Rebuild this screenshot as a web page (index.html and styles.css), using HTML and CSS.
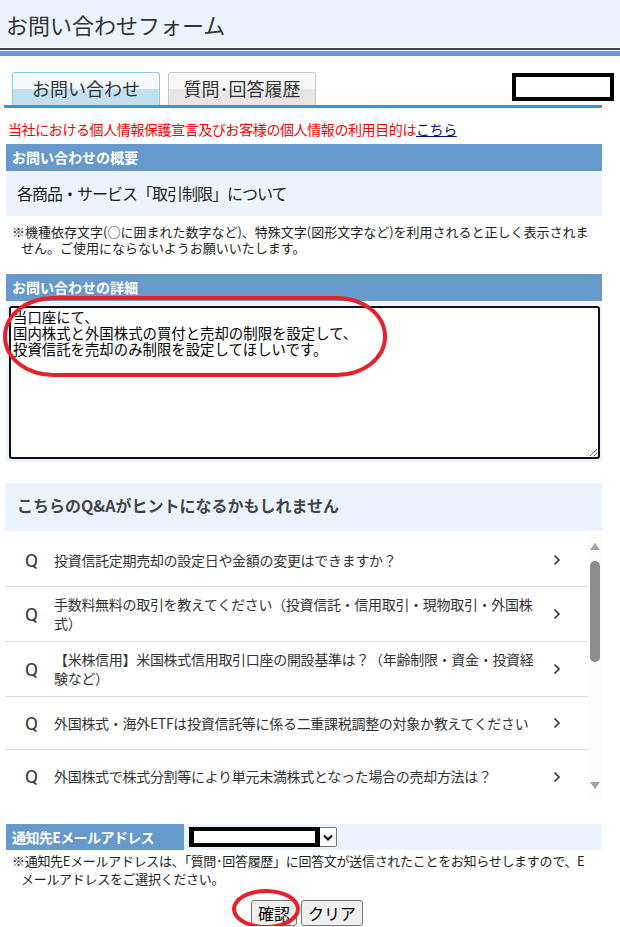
FILE: index.html
```html
<!DOCTYPE html>
<html lang="ja">
<head>
<meta charset="utf-8">
<title>お問い合わせフォーム</title>
<link rel="stylesheet" href="styles.css">
</head>
<body>
<header class="page-head">
  <h1>お問い合わせフォーム</h1>
</header>
<div class="head-rule"></div>

<main class="wrap">
  <nav class="tabs">
    <a class="tab tab-active">お問い合わせ</a>
    <a class="tab tab-plain">質問･回答履歴</a>
    <div class="redact-name"></div>
  </nav>

  <p class="privacy">当社における個人情報保護宣言及びお客様の個人情報の利用目的は<a href="#">こちら</a></p>

  <section class="block">
    <h2 class="sec-head">お問い合わせの概要</h2>
    <div class="summary">各商品・サービス「取引制限」について</div>
  </section>

  <p class="note">※機種依存文字(○に囲まれた数字など)、特殊文字(図形文字など)を利用されると正しく表示されません。ご使用にならないようお願いいたします。</p>

  <section class="block block-detail">
    <h2 class="sec-head">お問い合わせの詳細</h2>
    <div class="detail">
      <textarea class="detail-input">当口座にて、
国内株式と外国株式の買付と売却の制限を設定して、
投資信託を売却のみ制限を設定してほしいです。</textarea>
    </div>
  </section>

  <section class="qa">
    <h3 class="qa-head">こちらのQ&amp;Aがヒントになるかもしれません</h3>
    <div class="qa-body">
      <ul class="qa-list">
        <li class="qa-item"><span class="qa-q">Q</span><span class="qa-text">投資信託定期売却の設定日や金額の変更はできますか？</span><svg class="qa-arrow" width="8" height="12" viewBox="0 0 8 12"><path d="M1.5 1.5 L6 6 L1.5 10.5" fill="none" stroke="#333" stroke-width="1.6"/></svg></li>
        <li class="qa-item"><span class="qa-q">Q</span><span class="qa-text">手数料無料の取引を教えてください（投資信託・信用取引・現物取引・外国株式）</span><svg class="qa-arrow" width="8" height="12" viewBox="0 0 8 12"><path d="M1.5 1.5 L6 6 L1.5 10.5" fill="none" stroke="#333" stroke-width="1.6"/></svg></li>
        <li class="qa-item"><span class="qa-q">Q</span><span class="qa-text">【米株信用】米国株式信用取引口座の開設基準は？（年齢制限・資金・投資経験など）</span><svg class="qa-arrow" width="8" height="12" viewBox="0 0 8 12"><path d="M1.5 1.5 L6 6 L1.5 10.5" fill="none" stroke="#333" stroke-width="1.6"/></svg></li>
        <li class="qa-item"><span class="qa-q">Q</span><span class="qa-text">外国株式・海外ETFは投資信託等に係る二重課税調整の対象か教えてください</span><svg class="qa-arrow" width="8" height="12" viewBox="0 0 8 12"><path d="M1.5 1.5 L6 6 L1.5 10.5" fill="none" stroke="#333" stroke-width="1.6"/></svg></li>
        <li class="qa-item qa-last"><span class="qa-q">Q</span><span class="qa-text">外国株式で株式分割等により単元未満株式となった場合の売却方法は？</span><svg class="qa-arrow" width="8" height="12" viewBox="0 0 8 12"><path d="M1.5 1.5 L6 6 L1.5 10.5" fill="none" stroke="#333" stroke-width="1.6"/></svg></li>
      </ul>
      <div class="scrollbar">
        <svg class="sb-arrow" width="12" height="9" viewBox="0 0 12 9"><path d="M6 1 L11 8 L1 8 Z" fill="#a3a3a3"/></svg>
        <div class="sb-thumb"></div>
        <div class="sb-space"></div>
        <svg class="sb-arrow" width="12" height="9" viewBox="0 0 12 9"><path d="M1 1 L11 1 L6 8 Z" fill="#a3a3a3"/></svg>
      </div>
    </div>
  </section>

  <div class="mail-row">
    <div class="mail-label">通知先Eメールアドレス</div>
    <div class="mail-field">
      <div class="fake-select">
        <span class="redact-mail"></span>
        <span class="select-btn"><svg width="10" height="7" viewBox="0 0 10 7"><path d="M1 1.5 L5 5.5 L9 1.5" fill="none" stroke="#000" stroke-width="2"/></svg></span>
      </div>
    </div>
  </div>

  <p class="note note-mail">※通知先Eメールアドレスは、「質問･回答履歴」に回答文が送信されたことをお知らせしますので、Eメールアドレスをご選択ください。</p>

  <div class="buttons">
    <button class="btn" type="button">確認</button>
    <button class="btn" type="button">クリア</button>
  </div>
</main>

<div class="mark mark-detail"></div>
<div class="mark mark-confirm"></div>
</body>
</html>
```

FILE: styles.css
```css
* { box-sizing: border-box; }

body {
  margin: 0;
  font-family: "Noto Sans CJK JP", "Noto Sans", sans-serif;
  color: #222;
  background: #fff;
  position: relative;
}

.page-head {
  background: #ebf3fe;
  height: 47px;
  padding-left: 6px;
  display: flex;
  align-items: center;
}
.page-head h1 {
  margin: 0;
  font-size: 22px;
  font-weight: normal;
  color: #333;
  line-height: 1;
}
.head-rule {
  height: 9px;
  border-top: 1px solid #fff;
  background: linear-gradient(#444 0, #444 2px, #fff 2px, #fff 3px, #6699cc 3px, #6699cc 8px);
}

.wrap {
  width: 598px;
  margin-left: 4px;
}

/* tabs */
.tabs {
  display: flex;
  align-items: flex-end;
  gap: 8px;
  padding: 16px 0 0 8px;
  border-bottom: 3px solid #3399cc;
  height: 52px;
}
.tab {
  width: 148px;
  height: 33px;
  border: 1px solid #ccc;
  border-bottom: none;
  border-radius: 3px 3px 0 0;
  display: flex;
  align-items: center;
  justify-content: center;
  font-size: 18px;
  color: #333;
  padding-bottom: 2px;
}
.tab-active {
  border-color: #8fc6e8;
  background: linear-gradient(#f3f9fd 0, #f3f9fd 50%, #c2e0f0 50%, #c2e0f0 100%);
}
.tab-plain {
  border-color: #c8c8c8;
  background: linear-gradient(#f8f8f8 0, #f8f8f8 50%, #e6e6e6 50%, #e6e6e6 100%);
}
.redact-name {
  align-self: flex-start;
  margin: 1px -12px 0 auto;
  width: 102px;
  height: 28px;
  border: 4px solid #000;
  background: #fff;
}

.privacy {
  margin: 12px 0 6px 4px;
  font-size: 14px;
  line-height: 18px;
  letter-spacing: -0.4px;
  color: #f00;
}
.privacy a {
  color: #001a8c;
  text-decoration: underline;
}

.block { margin-left: 2px; }
.sec-head {
  margin: 0;
  height: 27px;
  line-height: 27px;
  background: #6699cc;
  color: #fff;
  font-size: 14px;
  font-weight: bold;
  padding-left: 6px;
}
.summary {
  height: 45px;
  line-height: 45px;
  background: #edf4fd;
  padding-left: 11px;
  font-size: 16px;
  letter-spacing: -1px;
  color: #222;
}

.note {
  margin: 8px 0 0 4px;
  padding: 0 8px 0 13px;
  text-indent: -9px;
  font-size: 13px;
  line-height: 16px;
  color: #222;
}

.block-detail { margin-top: 18px; }
.detail {
  background: #edf4fd;
  padding: 5px 2px 3px 3px;
  height: 161px;
}
.detail-input {
  display: block;
  width: 100%;
  height: 153px;
  border: 2px solid #111;
  border-radius: 3px;
  padding: 1px 2px;
  font-family: "Noto Sans CJK JP", sans-serif;
  font-size: 14.4px;
  line-height: 16px;
  color: #000;
  background: #fff;
  resize: vertical;
  outline: none;
}

/* Q&A */
.qa { margin: 21px 0 0 1px; }
.qa-head {
  margin: 0;
  height: 48px;
  background: #ebf3fe;
  display: flex;
  align-items: center;
  padding: 0 0 4px 12px;
  font-size: 16px;
  font-weight: bold;
  color: #444;
}
.qa-body {
  display: flex;
  height: 266px;
  margin-top: 3px;
}
.qa-list {
  flex: 1;
  margin: 0;
  padding: 0;
  list-style: none;
  overflow: hidden;
}
.qa-item {
  display: flex;
  align-items: center;
  min-height: 53px;
  padding: 8px 0;
  border-bottom: 1px solid #dcdcdc;
}
.qa-last { border-bottom: none; }
.qa-q {
  width: 49px;
  padding-left: 20px;
  font-family: "Roboto", "Noto Sans", sans-serif;
  font-size: 19px;
  color: #333;
}
.qa-text {
  width: 487px;
  font-size: 14px;
  line-height: 19px;
  letter-spacing: -0.3px;
  color: #333;
}
.qa-arrow {
  margin-left: 12px;
  flex: none;
}

.scrollbar {
  width: 14px;
  background: #fbfbfb;
  display: flex;
  flex-direction: column;
  align-items: center;
  padding: 8px 0 10px;
}
.sb-arrow { flex: none; }
.sb-thumb {
  width: 10px;
  height: 101px;
  margin-top: 10px;
  background: #8c8c8c;
  border-radius: 5px;
}
.sb-space { flex: 1; }

/* mail */
.mail-row {
  display: flex;
  height: 26px;
  margin: 24px 0 0 2px;
}
.mail-label {
  width: 178px;
  background: #6699cc;
  color: #fff;
  font-size: 14px;
  font-weight: bold;
  line-height: 26px;
  letter-spacing: -0.6px;
  padding-left: 6px;
}
.mail-field {
  flex: 1;
  background: #ebf3fe;
  padding: 3px 5px;
}
.fake-select {
  display: flex;
  width: 148px;
  height: 20px;
}
.redact-mail {
  width: 131px;
  border: 5px solid #000;
  border-top-width: 4px;
  border-bottom-width: 4px;
  background: #fff;
}
.select-btn {
  flex: 1;
  border: 1px solid #767676;
  border-left: none;
  border-radius: 0 2px 2px 0;
  background: #fff;
  display: flex;
  align-items: center;
  justify-content: center;
}

.note-mail {
  margin-top: 2px;
  line-height: 18px;
  letter-spacing: -0.3px;
}

.buttons {
  display: flex;
  justify-content: center;
  gap: 4px;
  margin-top: 12px;
  padding-left: 8px;
}
.btn {
  height: 26px;
  padding: 0 6px;
  border: 1px solid #767676;
  border-radius: 3px;
  background: #efefef;
  font-family: "Noto Sans CJK JP", sans-serif;
  font-size: 16px;
  color: #000;
  line-height: 22px;
}

/* red annotation marks drawn over the screenshot */
.mark {
  position: absolute;
  border: 4px solid #e8202a;
  pointer-events: none;
}
.mark-detail {
  left: 3px;
  top: 296px;
  width: 384px;
  height: 81px;
  border-radius: 50px / 40px;
}
.mark-confirm {
  left: 232px;
  top: 889px;
  width: 68px;
  height: 40px;
  border-radius: 50%;
}
```
